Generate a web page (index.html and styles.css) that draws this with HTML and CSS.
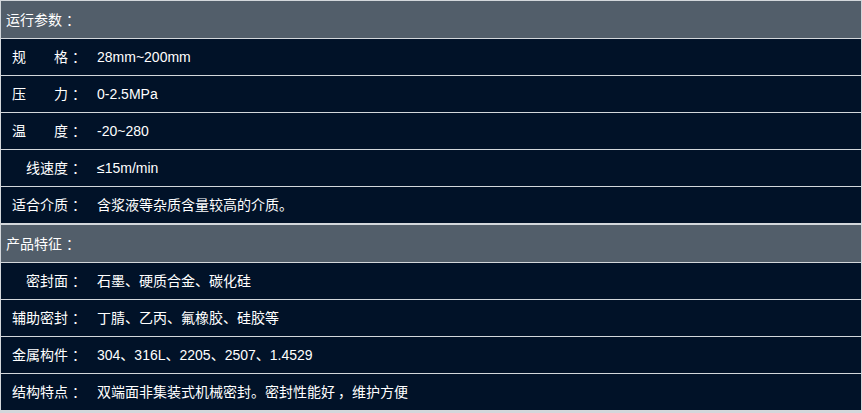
FILE: index.html
```html
<!DOCTYPE html>
<html lang="zh-CN">
<head>
<meta charset="utf-8">
<link rel="stylesheet" href="styles.css">
</head>
<body>
<div class="spec">
  <div class="section-title">运行参数<span class="punct">：</span></div>
  <div class="row"><div class="label">规　　格<span class="punct">：</span></div><div class="value">28mm~200mm</div></div>
  <div class="row"><div class="label">压　　力<span class="punct">：</span></div><div class="value">0-2.5MPa</div></div>
  <div class="row"><div class="label">温　　度<span class="punct">：</span></div><div class="value">-20~280</div></div>
  <div class="row"><div class="label">线速度<span class="punct">：</span></div><div class="value">≤15m/min</div></div>
  <div class="row"><div class="label">适合介质<span class="punct">：</span></div><div class="value">含浆液等杂质含量较高的介质。</div></div>
  <div class="section-title">产品特征<span class="punct">：</span></div>
  <div class="row"><div class="label">密封面<span class="punct">：</span></div><div class="value">石墨、硬质合金、碳化硅</div></div>
  <div class="row"><div class="label">辅助密封<span class="punct">：</span></div><div class="value">丁腈、乙丙、氟橡胶、硅胶等</div></div>
  <div class="row"><div class="label">金属构件<span class="punct">：</span></div><div class="value">304、316L、2205、2507、1.4529</div></div>
  <div class="row"><div class="label">结构特点<span class="punct">：</span></div><div class="value">双端面非集装式机械密封。密封性能好<span class="comma">，</span>维护方便</div></div>
</div>
</body>
</html>
```
FILE: styles.css
```css
html, body {
  margin: 0;
  padding: 0;
  background: #d6dadd;
}
body {
  font-family: "Liberation Sans", "Noto Sans CJK SC", sans-serif;
  font-size: 14px;
  color: #ffffff;
}
.spec {
  width: 860px;
  border-left: 1px solid #d3d7db;
  border-right: 1px solid #d3d7db;
  border-bottom: 2px solid #d3d7db;
  background: #011228;
}
.section-title {
  height: 37px;
  line-height: 38px;
  padding-left: 5px;
  background: #525e6a;
  border-top: 1px solid #d3d7db;
  border-bottom: 1px solid #d3d7db;
}
.row {
  display: flex;
  height: 36px;
  line-height: 36px;
  border-bottom: 1px solid #d3d7db;
  background: #011228;
}
.label {
  width: 81px;
  padding-right: 15px;
  text-align: right;
  white-space: nowrap;
}
.value {
  flex: 1;
  white-space: nowrap;
}
.punct {
  padding-left: 4px;
  margin-right: -4px;
}
.comma {
  padding-left: 3px;
}
```
